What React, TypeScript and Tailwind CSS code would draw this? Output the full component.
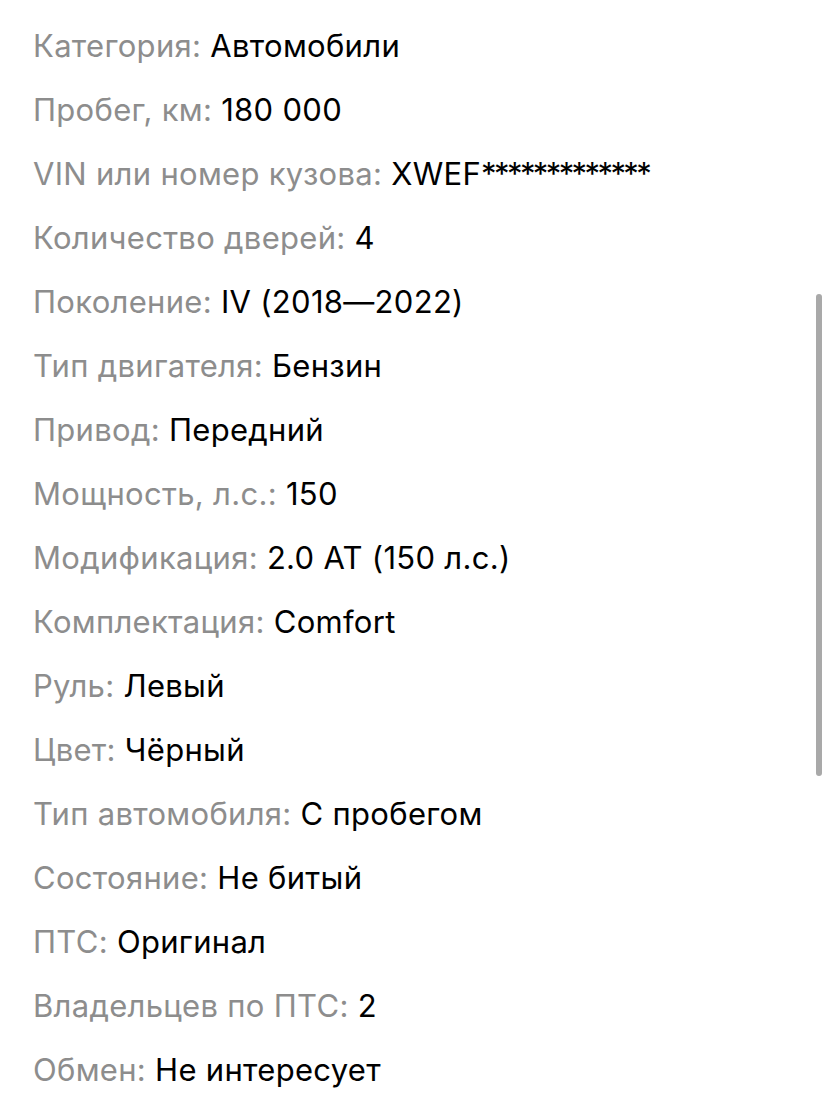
import React from "react";

const rows: [string, string][] = [
    ["Категория", "Автомобили"],
    ["Пробег, км", "180 000"],
    ["VIN или номер кузова", "XWEF"],
    ["Количество дверей", "4"],
    ["Поколение", "IV (2018—2022)"],
    ["Тип двигателя", "Бензин"],
    ["Привод", "Передний"],
    ["Мощность, л.с.", "150"],
    ["Модификация", "2.0 AT (150 л.с.)"],
    ["Комплектация", "Comfort"],
    ["Руль", "Левый"],
    ["Цвет", "Чёрный"],
    ["Тип автомобиля", "С пробегом"],
    ["Состояние", "Не битый"],
    ["ПТС", "Оригинал"],
    ["Владельцев по ПТС", "2"],
    ["Обмен", "Не интересует"],
];

export default function App() {
    return (
        <div className="relative w-[828px] h-[1114px] bg-white overflow-hidden" style={{ fontFamily: "Inter, 'Noto Sans', sans-serif" }}>
            <ul className="pt-[14px] pl-[33px] flex flex-col">
                {rows.map(([label, value]) => (
                    <li key={label} className="text-[31px] leading-[64px] tracking-[0.3px] whitespace-nowrap">
                        <span className="text-[#8d8d8d]">{label}: </span>
                        <span className="text-black">{value}</span>
                        {label.startsWith("VIN") && (
                            <span className="text-black tracking-[-2.6px]">*************</span>
                        )}
                    </li>
                ))}
            </ul>
            {/* scrollbar */}
            <div className="absolute left-[816px] top-[294px] w-[6px] h-[482px] rounded-full bg-[#a9a9a9]" />
        </div>
    );
}
